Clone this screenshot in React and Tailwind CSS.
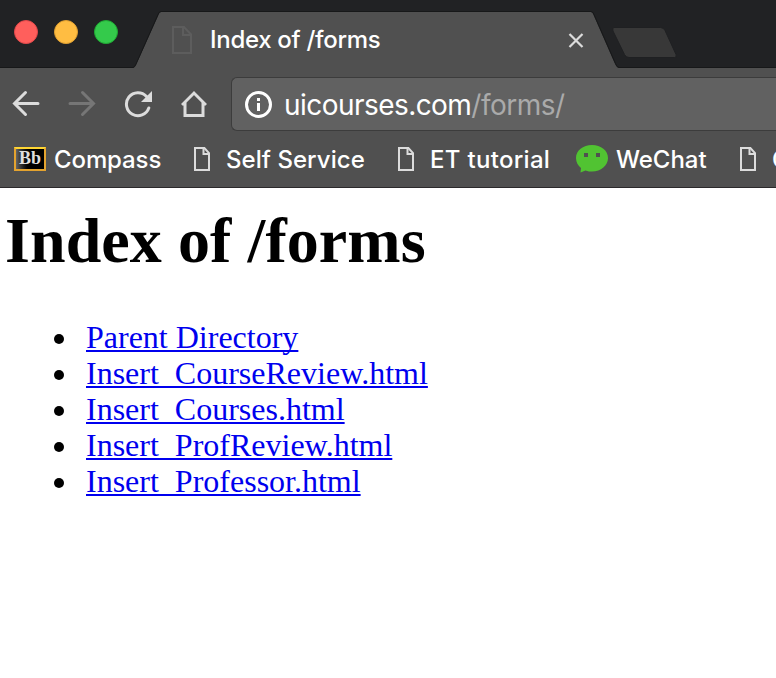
const links = [
  "Parent Directory",
  "Insert_CourseReview.html",
  "Insert_Courses.html",
  "Insert_ProfReview.html",
  "Insert_Professor.html",
];

function PageIcon() {
  return (
    <svg className="mb-0.5 shrink-0 text-[#dcdcdc]" width="16" height="24" viewBox="0 0 16 24" fill="none" stroke="currentColor" strokeWidth="2">
      <path d="M1 1H10.400L15 6.200V23H1Z" />
      <path d="M9.500 1V7H15" />
    </svg>
  );
}

function TitleBar() {
  return (
    <div className="flex h-[68px] shrink-0 bg-[#212224]">
      <div className="flex w-[133px] shrink-0 gap-4 border-b border-[#171819] pl-[14px] pt-5">
        <div className="size-6 rounded-full border border-[#e2484a] bg-[#ff5f5c]" />
        <div className="size-6 rounded-full border border-[#df9f30] bg-[#ffbd42]" />
        <div className="size-6 rounded-full border border-[#1fa933] bg-[#34ca4b]" />
      </div>
      <svg className="shrink-0" width="28" height="68" viewBox="0 0 28 68">
        <path d="M0 68C2 67.5 2.500 66 3.500 64L25.500 15Q26.500 12 28 12V68Z" fill="#505050" />
        <path d="M0 67.5C1.500 67 2 66 3 64L25 14.500Q26 11.500 28 11.500" fill="none" stroke="#171819" />
      </svg>
      <div className="mt-[11px] flex w-[430px] shrink-0 items-center border-t border-[#171819] bg-[#505050]">
        <svg className="ml-[11px] shrink-0 text-[#5d5d5d]" width="20" height="28" viewBox="0 0 20 28" fill="none" stroke="currentColor" strokeWidth="2">
          <path d="M1 1H12L19 8.500V27H1Z" />
          <path d="M11 1V9H19" />
        </svg>
        <span className="ml-[18px] w-[358px] whitespace-nowrap text-2xl font-medium tracking-[-0.3px] text-white">Index of /forms</span>
        <svg className="shrink-0" width="16" height="15" viewBox="0 0 16 15" stroke="#dcdcdc" strokeWidth="2.200">
          <path d="M1.500 1L14.500 14M14.500 1L1.500 14" />
        </svg>
      </div>
      <svg className="shrink-0" width="28" height="68" viewBox="0 0 28 68">
        <path d="M0 12Q1.500 12 2.500 15L24 64Q26 68 28 68H0Z" fill="#505050" />
        <path d="M0 11.500Q2 11.500 3 14.500L24.500 63.500Q26 67.500 28 67.500" fill="none" stroke="#171819" />
      </svg>
      <div className="grow border-b border-[#171819]">
        <svg className="-ml-[7px] mt-[27px]" width="66" height="31" viewBox="0 0 66 31">
          <path d="M2 .5H48.500Q51.500 .5 53 3.500L64 27.500Q65 30.500 62.500 30.500H17Q14 30.500 12.500 27.500L1 4Q0 1 2 .5Z" fill="#383838" stroke="#1f2022" />
        </svg>
      </div>
    </div>
  );
}

function Toolbar() {
  return (
    <div className="flex h-[64px] shrink-0 items-start">
      <svg className="ml-3 mt-[22px] shrink-0" width="28" height="28" viewBox="0 0 28 28" fill="none" stroke="#dcdcdc" strokeWidth="3" strokeLinecap="round">
        <path d="M26 13.500H3M13.500 2.500L2.500 13.500L13.500 24.500" />
      </svg>
      <svg className="ml-7 mt-[22px] shrink-0" width="28" height="28" viewBox="0 0 28 28" fill="none" stroke="#767676" strokeWidth="3" strokeLinecap="round">
        <path d="M2 13.500H25M14.500 2.500L25.500 13.500L14.500 24.500" />
      </svg>
      <svg className="ml-7 mt-[22px] shrink-0" width="30" height="28" viewBox="0 0 30 28" fill="none">
        <path d="M22.500 6.500A11.500 11.500 0 1 0 24.800 18" stroke="#dcdcdc" strokeWidth="3" strokeLinecap="round" />
        <path d="M28 1V12H17Z" fill="#dcdcdc" />
      </svg>
      <svg className="ml-[27px] mt-[22px] shrink-0" width="26" height="28" viewBox="0 0 26 28" fill="none" stroke="#dcdcdc" strokeWidth="3">
        <path d="M1 15L13 3L25 15" />
        <path d="M4 12.500V25.500H22V12.500" />
      </svg>
      <div className="ml-6 mt-[9px] flex h-[54px] grow items-center rounded-l-md border border-r-0 border-[#3c3c3c] bg-[#616161]">
        <svg className="ml-[13px] shrink-0" width="27" height="27" viewBox="0 0 27 27">
          <circle cx="13.500" cy="13.500" r="12" fill="none" stroke="#fff" strokeWidth="3" />
          <path d="M12 7H15V10H12ZM12 12H15V20H12Z" fill="#fff" />
        </svg>
        <span className="ml-3 mt-0.5 whitespace-nowrap text-[28px] leading-8 tracking-[-0.55px] text-white">
          uicourses.com<span className="tracking-[-0.5px] text-[#aaaaaa]">/forms/</span>
        </span>
      </div>
    </div>
  );
}

function Bookmarks() {
  return (
    <div className="flex h-14 shrink-0 items-center overflow-hidden border-b border-[#2b292b] pl-[14px] pt-px text-2xl font-medium text-white">
      <span className="mb-0.5 flex h-6 w-8 shrink-0 items-center justify-center border-2 border-[#e4a32f] border-t-[#ffd633] bg-linear-to-r from-[#666] to-black to-50% pb-0.5 font-['Liberation_Serif',serif] text-[18px] leading-none font-bold text-[#ddd]">
        Bb
      </span>
      <span className="ml-2 w-[140px] shrink-0 tracking-[-0.1px]">Compass</span>
      <PageIcon />
      <span className="ml-4 w-[172px] shrink-0 whitespace-nowrap tracking-[0.05px]">Self Service</span>
      <PageIcon />
      <span className="ml-4 w-[146px] shrink-0 whitespace-nowrap tracking-[0.3px]">ET tutorial</span>
      <svg className="mb-0.5 shrink-0" width="32" height="30" viewBox="0 0 32 30">
        <path d="M16 1C7 1 0 6.500 0 14C0 18.500 2 21.500 5 24L4.500 28.500L9.500 26.500C12 27.500 14 27.500 16 27.500C25 27.500 32 21.500 32 14C32 6.500 25 1 16 1Z" fill="#51c332" />
        <path d="M8 9H12V13H8ZM20 9H24V13H20Z" fill="#505050" />
      </svg>
      <span className="ml-2 w-[124px] shrink-0 tracking-[-0.05px]">WeChat</span>
      <PageIcon />
      <span className="ml-4 shrink-0">C</span>
    </div>
  );
}

export default function App() {
  return (
    <div className="flex h-[678px] w-[776px] flex-col overflow-hidden bg-white">
      <header className="flex flex-col bg-[#505050] font-['Inter',sans-serif]">
        <TitleBar />
        <Toolbar />
        <Bookmarks />
      </header>
      <main className="pl-[5px] pt-[17px] font-['Liberation_Serif',serif] text-black">
        <h1 className="text-[64px] leading-[72px] font-bold tracking-[0.08px]">Index of /forms</h1>
        <ul className="mt-[42px] text-[32px] leading-9">
          {links.map((label) => (
            <li key={label} className="flex items-center">
              <span className="ml-[49px] mt-[3px] size-[10px] rounded-full bg-black" />
              <a className="ml-[22px] text-[#0000ee] underline decoration-2 underline-offset-2 [text-decoration-skip-ink:none]" href="#">
                {label}
              </a>
            </li>
          ))}
        </ul>
      </main>
    </div>
  );
}
